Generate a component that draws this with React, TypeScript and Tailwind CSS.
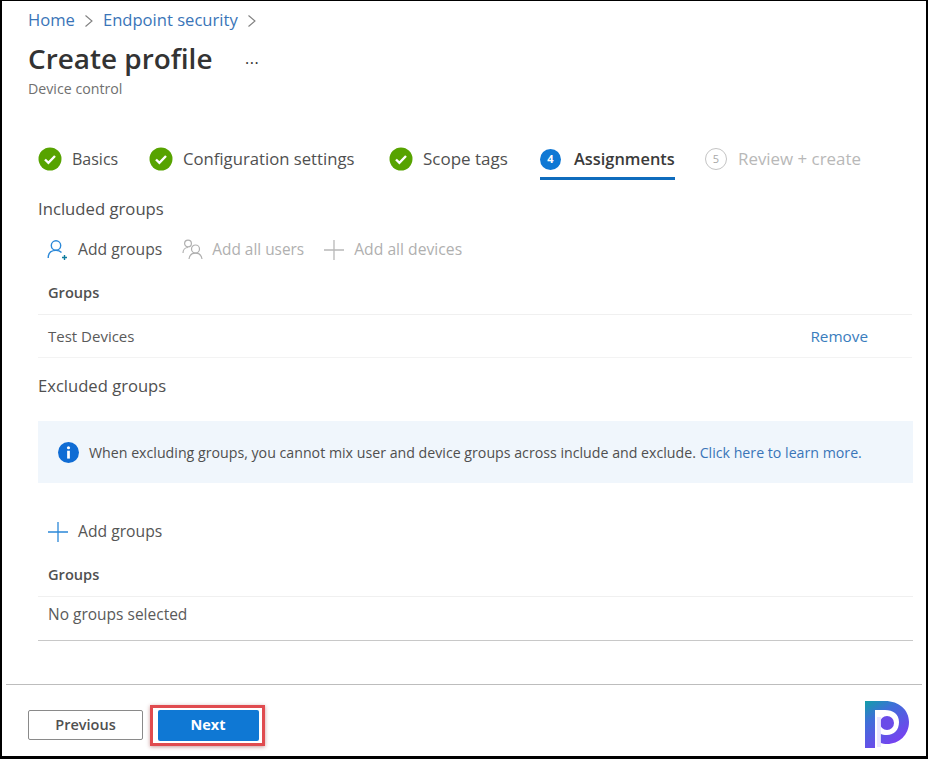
import React from "react";

const Check = () => (
  <svg width="24" height="24" viewBox="0 0 24 24" className="shrink-0">
    <circle cx="12" cy="12" r="11.5" fill="#57a300" />
    <path d="M7 12.5l3.4 3.4L17 9" fill="none" stroke="#fff" strokeWidth="2.4" />
  </svg>
);

const Step = ({ label, className, size }: { label: string; className: string; size: string }) => (
  <div className={`flex items-center gap-[10px] h-[42px] ${className}`}>
    <Check />
    <span className={`${size} text-[#505050]`}>{label}</span>
  </div>
);

const UserAdd = () => (
  <svg width="22" height="22" viewBox="0 0 22 22" fill="none" stroke="#2b88d8" strokeWidth="1.4">
    <circle cx="9" cy="6.5" r="4.7" />
    <path d="M1.2 19c0-4.800 3-7.600 7.800-7.600 2.400 0 4.200.7 5.500 2" />
    <path d="M17.500 16v5M15 18.500h5" stroke="#107c9e" />
  </svg>
);

const Users = () => (
  <svg width="22" height="22" viewBox="0 0 22 22" fill="none" stroke="#b0b0b0" strokeWidth="1.2">
    <circle cx="6" cy="4.500" r="3.400" />
    <path d="M1 14c0-3 2-5.500 5-5.500" />
    <circle cx="13.500" cy="10" r="4" />
    <path d="M7 20c.4-3.500 3-5.800 6.500-5.800s6 2.300 6.500 5.800" />
  </svg>
);

const Plus = ({ color }: { color: string }) => (
  <svg width="20" height="20" viewBox="0 0 20 20" fill="none" stroke={color} strokeWidth="1.3">
    <path d="M10 0v20M0 10h20" />
  </svg>
);

export default function App() {
  return (
    <div
      className="w-[928px] h-[759px] bg-white border-l-2 border-r-2 border-t border-b-[3px] border-black flex flex-col text-[#4c4c4c] overflow-hidden"
      style={{ fontFamily: '"Open Sans", "Noto Sans", sans-serif' }}
    >
      <div className="pl-[26px] pt-[8px] flex items-center gap-[9px] h-[31px] text-[16.6px] text-[#3a75b8]">
        <span>Home</span>
        <svg width="10" height="14" viewBox="0 0 10 14" fill="none" stroke="#808080" strokeWidth="1.1"><path d="M1.500 1.500L8 7l-6.500 5.500" /></svg>
        <span>Endpoint security</span>
        <svg width="10" height="14" viewBox="0 0 10 14" fill="none" stroke="#808080" strokeWidth="1.1"><path d="M1.500 1.500L8 7l-6.500 5.500" /></svg>
      </div>
      <div className="pl-[26px] flex items-center h-[54px]">
        <h1 className="text-[27.9px] font-semibold text-[#333] w-[217px]">Create profile</h1>
        <span className="text-[16px] leading-none text-[#333] tracking-[0.5px] -mt-[3px]">...</span>
      </div>
      <div className="pl-[26px] text-[14.2px] leading-[18px] text-[#707070] h-[18px] -mt-[6px]">Device control</div>

      <div className="pl-[36px] mt-[40px] flex items-center h-[42px]">
        <Step label="Basics" size="text-[16px]" className="w-[111px]" />
        <Step label="Configuration settings" size="text-[16.7px]" className="w-[240px]" />
        <Step label="Scope tags" size="text-[17px]" className="w-[151px]" />
        <div className="flex items-center gap-[13px] h-[42px] border-b-[3px] border-[#0f6cbd] pt-[3px] w-[135px]">
          <span className="shrink-0 w-[21px] h-[21px] rounded-full bg-[#0f78d4] text-white text-[11px] font-bold flex items-center justify-center">4</span>
          <span className="text-[16.4px] font-semibold text-[#3a3a3a]">Assignments</span>
        </div>
        <div className="flex items-center gap-[11px] ml-[30px]">
          <span className="shrink-0 w-[22px] h-[22px] rounded-full border-[1.5px] border-[#c4c4c4] text-[#a8a8a8] text-[11px] flex items-center justify-center">5</span>
          <span className="text-[16.9px] text-[#b8b8b8]">Review + create</span>
        </div>
      </div>

      <div className="pl-[36px] mt-[17px] text-[16.7px] leading-[24px] text-[#505050]">Included groups</div>

      <div className="pl-[45px] mt-[17px] h-[24px] flex items-center text-[15.7px]">
        <UserAdd />
        <span className="ml-[9px] text-[#555]">Add groups</span>
        <span className="ml-[20px]"><Users /></span>
        <span className="ml-[8px] text-[15.4px] text-[#b0b0b0]">Add all users</span>
        <span className="ml-[20px]"><Plus color="#b8b8b8" /></span>
        <span className="ml-[10px] text-[#b0b0b0]">Add all devices</span>
      </div>

      <div className="ml-[36px] mr-[14px] mt-[18px] h-[35px] pl-[10px] pb-[8px] flex items-center border-b border-[#f0f0f0] text-[14.6px] font-semibold text-[#505050]">Groups</div>
      <div className="ml-[36px] mr-[14px] h-[43px] pl-[10px] pr-[44px] flex items-center justify-between border-b border-[#f3f3f3] text-[15px]">
        <span className="text-[#5a5a5a]">Test Devices</span>
        <span className="text-[15.3px] text-[#3a7dbd]">Remove</span>
      </div>

      <div className="pl-[36px] mt-[16px] text-[16.6px] leading-[24px] text-[#505050]">Excluded groups</div>

      <div className="ml-[36px] mr-[13px] mt-[23px] h-[62px] bg-[#f0f6fc] pl-[20px] flex items-center gap-[10px]">
        <svg width="21" height="21" viewBox="0 0 20 20" className="shrink-0">
          <circle cx="10" cy="10" r="10" fill="#0f6cd4" />
          <circle cx="10" cy="5.500" r="1.500" fill="#fff" />
          <rect x="8.700" y="8.300" width="2.600" height="7.500" fill="#fff" />
        </svg>
        <span className="text-[14.2px] text-[#4f4f4f] whitespace-nowrap pt-[1px]">
          When excluding groups, you cannot mix user and device groups across include and exclude. <span className="text-[#3a75b8]">Click here to learn more.</span>
        </span>
      </div>

      <div className="pl-[46px] mt-[37px] h-[24px] flex items-center text-[15.7px]">
        <Plus color="#2b88d8" />
        <span className="ml-[10px] text-[#555]">Add groups</span>
      </div>

      <div className="ml-[36px] mr-[13px] mt-[18px] h-[35px] pl-[10px] pb-[8px] flex items-center border-b border-[#f0f0f0] text-[14.6px] font-semibold text-[#505050]">Groups</div>
      <div className="ml-[36px] mr-[13px] h-[44px] pl-[10px] pb-[8px] flex items-center border-b border-[#c8c8c8] text-[15.5px] text-[#5a5a5a]">No groups selected</div>

      <div className="mt-auto mx-[4px] border-t border-[#bdbdbd] h-[72px] pl-[22px] pr-[12px] pt-[9px] flex items-center">
        <button className="w-[115px] h-[30px] rounded-[2px] border border-[#8a8a8a] bg-white text-[14.5px] font-semibold text-[#505050]">Previous</button>
        <div className="ml-[7px] w-[115px] h-[41px] pl-[1px] border-[3px] border-[#e04b4f] shadow-[0_1px_4px_rgba(120,0,0,0.4)] flex items-center justify-center bg-white">
          <button className="w-[101px] h-[31px] rounded-[2px] bg-[#0f78d4] text-[14.5px] font-bold text-white">Next</button>
        </div>
        <svg width="46" height="50" viewBox="0 0 46 50" className="ml-auto -mt-[3px] blur-[0.6px]">
          <defs>
            <linearGradient id="pg" x1="0" y1="0" x2="0.6" y2="1">
              <stop offset="0" stopColor="#119fa8" />
              <stop offset="0.35" stopColor="#3f6fd8" />
              <stop offset="1" stopColor="#7a3ff2" />
            </linearGradient>
          </defs>
          <path d="M1 2h20c14 0 24 9 24 21 0 13-10 22-22 22-2 0-5-.5-7-1.500v-9c2 1 4 1.500 7 1.500 7 0 12-5 12-13s-6-12-14-12H11v38H1z" fill="url(#pg)" />
          <circle cx="23" cy="24" r="7" fill="#6a4be8" />
          <path d="M15 18v30" stroke="#e8e4ff" strokeWidth="4" opacity="0.9" />
        </svg>
      </div>
    </div>
  );
}
